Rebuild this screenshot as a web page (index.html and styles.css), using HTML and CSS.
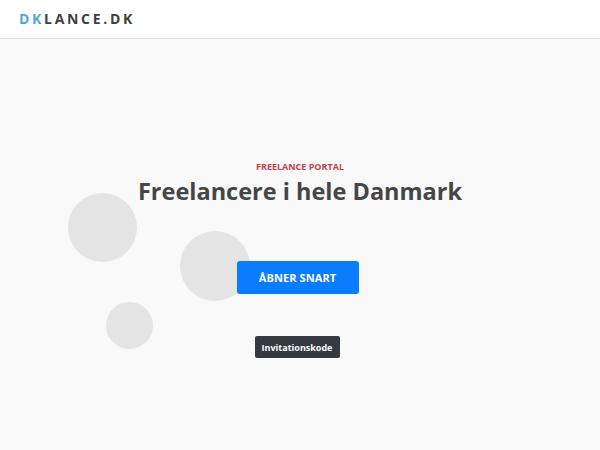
FILE: index.html
```html
<!DOCTYPE html>
<html lang="da">
<head>
    <meta charset="UTF-8">
    <meta name="viewport" content="width=device-width, initial-scale=1.0">
    <title>DKLANCE.DK</title>
    <link rel="stylesheet" href="styles.css">
</head>
<body>
    <header class="topbar">
        <div class="logo"><span class="logo-dk">DK</span>LANCE.DK</div>
    </header>

    <main class="hero">
        <span class="bubble bubble-one"></span>
        <span class="bubble bubble-two"></span>
        <span class="bubble bubble-three"></span>

        <div class="hero-inner">
            <p class="eyebrow">FREELANCE PORTAL</p>
            <h1>Freelancere i hele Danmark</h1>
            <a class="btn-primary" href="#">ÅBNER SNART</a>
            <a class="btn-invite" href="#">Invitationskode</a>
        </div>
    </main>
</body>
</html>
```

FILE: styles.css
```css
* {
    box-sizing: border-box;
}

body {
    margin: 0;
    font-family: 'Open Sans', 'Noto Sans', sans-serif;
    background-color: #f9f9f9;
    color: #444;
    height: 450px;
    overflow: hidden;
}

.topbar {
    height: 39px;
    background-color: #fff;
    border-bottom: 1px solid #e3e3e3;
    display: flex;
    align-items: center;
    padding-left: 19px;
}

.logo {
    font-size: 14px;
    font-weight: 700;
    letter-spacing: 2.7px;
    color: #3f3f3f;
    margin-top: -1px;
}

.logo-dk {
    color: #4ea8d8;
}

.hero {
    position: relative;
    height: 411px;
}

.hero-inner {
    position: relative;
    display: flex;
    flex-direction: column;
    align-items: center;
    padding-top: 122px;
}

.eyebrow {
    margin: 0;
    font-size: 9px;
    font-weight: 700;
    color: #c2404f;
    line-height: 12px;
}

h1 {
    margin: 1px 0 0;
    font-size: 23.5px;
    font-weight: 700;
    color: #454545;
    line-height: 34px;
}

.btn-primary {
    margin: 53px 5px 0 0;
    width: 122px;
    height: 33px;
    display: flex;
    align-items: center;
    justify-content: center;
    background-color: #0a7cff;
    color: #fff;
    border-radius: 3px;
    font-size: 11px;
    font-weight: 700;
    text-decoration: none;
    letter-spacing: 0.1px;
}

.btn-invite {
    margin: 42px 6px 0 0;
    width: 85px;
    height: 22px;
    display: flex;
    align-items: center;
    justify-content: center;
    background-color: #343a40;
    color: #fff;
    border-radius: 2px;
    font-size: 9px;
    font-weight: 700;
    text-decoration: none;
}

.bubble {
    position: absolute;
    border-radius: 50%;
    background-color: #e4e4e4;
}

.bubble-one {
    left: 68px;
    top: 154px;
    width: 69px;
    height: 69px;
}

.bubble-two {
    left: 180px;
    top: 192px;
    width: 70px;
    height: 70px;
}

.bubble-three {
    left: 106px;
    top: 263px;
    width: 47px;
    height: 47px;
}
```
